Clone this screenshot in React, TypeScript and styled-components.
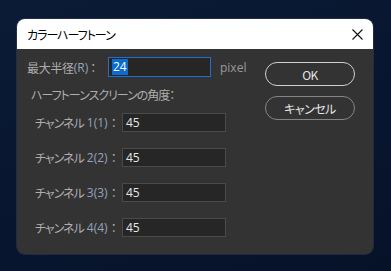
import React from "react";
import styled, { createGlobalStyle } from "styled-components";

const Global = createGlobalStyle`
  html, body { margin: 0; padding: 0; }
  body {
    width: 391px;
    height: 271px;
    overflow: hidden;
    background: linear-gradient(160deg, #0c1b35 0%, #081630 50%, #061228 100%);
    font-family: "Noto Sans CJK JP", "Noto Sans", sans-serif;
    font-feature-settings: "palt";
  }
`;

const Stage = styled.div`
  padding: 19px 18px 17px 17px;
`;

const Dialog = styled.div`
  width: 356px;
  height: 235px;
  border-radius: 8px;
  overflow: hidden;
  background: #333333;
  display: flex;
  flex-direction: column;
  box-shadow: 0 0 0 1px rgba(80, 90, 110, 0.35);
`;

const TitleBar = styled.div`
  height: 30px;
  flex: none;
  background: #ffffff;
  display: flex;
  align-items: center;
  padding-left: 10px;
`;

const Title = styled.div`
  flex: 1;
  font-size: 12px;
  color: #000;
  letter-spacing: -1px;
`;

const CloseBox = styled.div`
  width: 32px;
  height: 30px;
  display: flex;
  align-items: center;
  justify-content: center;
`;

const Body = styled.div`
  flex: 1;
  display: flex;
`;

const LeftCol = styled.div`
  padding: 8px 0 0 10px;
  display: flex;
  flex-direction: column;
`;

const Row = styled.div<{ $indent?: number; $h?: number }>`
  display: flex;
  align-items: center;
  height: ${(p) => p.$h ?? 20}px;
  padding-left: ${(p) => p.$indent ?? 0}px;
`;

const Label = styled.div<{ $w: number; $ls?: number }>`
  width: ${(p) => p.$w}px;
  font-size: 12px;
  color: #aeaeae;
  white-space: nowrap;
  display: flex;
  align-items: center;
  letter-spacing: ${(p) => p.$ls ?? 0}px;
`;

const Latin = styled.span<{ $gap?: number }>`
  font-family: "Open Sans", "Noto Sans", sans-serif;
  color: #93a3bd;
  letter-spacing: 0;
  margin-left: ${(p) => p.$gap ?? 0}px;
`;

const Colon = styled.span<{ $gap?: number }>`
  margin-left: ${(p) => p.$gap ?? 0}px;
`;

const Field = styled.div<{ $w: number; $focused?: boolean }>`
  box-sizing: border-box;
  width: ${(p) => p.$w}px;
  height: ${(p) => (p.$focused ? 20 : 19)}px;
  background: #262626;
  border: 1px solid ${(p) => (p.$focused ? "#1e6fcf" : "#4a4a4a")};
  display: flex;
  align-items: center;
  padding-left: 3px;
  font-family: "Open Sans", "Noto Sans", sans-serif;
  font-size: 12px;
  color: #e6e6e6;
`;

const Selected = styled.span`
  background: #0a6bd0;
  color: #ffffff;
  padding: 0 1px;
  line-height: 16px;
`;

const Unit = styled.div`
  margin-left: 9px;
  font-family: "Open Sans", "Noto Sans", sans-serif;
  font-size: 12px;
  color: #9a9a9a;
`;

const Heading = styled.div`
  margin-top: 10px;
  padding-left: 4px;
  height: 16px;
  line-height: 16px;
  font-size: 12px;
  color: #aeaeae;
  letter-spacing: -1px;
`;

const Channels = styled.div`
  margin-top: 10px;
  display: flex;
  flex-direction: column;
  gap: 16px;
`;

const RightCol = styled.div`
  margin-left: auto;
  padding: 13px 18px 0 0;
  display: flex;
  flex-direction: column;
  gap: 10px;
`;

const Button = styled.div<{ $primary?: boolean }>`
  box-sizing: border-box;
  width: 90px;
  height: 24px;
  border-radius: 12px;
  border: ${(p) => (p.$primary ? "1.5px solid #cfcfcf" : "1.5px solid #858585")};
  display: flex;
  align-items: center;
  justify-content: center;
  font-size: 12px;
  color: #e4e4e4;
  letter-spacing: -0.5px;
`;

const channels = [1, 2, 3, 4];

export default function App() {
  return (
    <>
      <Global />
      <Stage>
        <Dialog>
          <TitleBar>
            <Title>カラーハーフトーン</Title>
            <CloseBox>
              <svg width="11" height="11" viewBox="0 0 11 11">
                <path d="M0.5 0.5 L10.5 10.5 M10.5 0.5 L0.5 10.5" stroke="#111" strokeWidth="1.1" />
              </svg>
            </CloseBox>
          </TitleBar>
          <Body>
            <LeftCol>
              <Row>
                <Label $w={81} $ls={-0.3}>
                  最大半径<Latin>(R)</Latin>
                  <Colon $gap={2}>：</Colon>
                </Label>
                <Field $w={103} $focused>
                  <Selected>24</Selected>
                </Field>
                <Unit>pixel</Unit>
              </Row>
              <Heading>ハーフトーンスクリーンの角度：</Heading>
              <Channels>
                {channels.map((n) => (
                  <Row key={n} $indent={8} $h={19}>
                    <Label $w={87} $ls={-1}>
                      チャンネル
                      <Latin $gap={3}>
                        {n}({n})
                      </Latin>
                      <Colon $gap={3}>：</Colon>
                    </Label>
                    <Field $w={104}>45</Field>
                  </Row>
                ))}
              </Channels>
            </LeftCol>
            <RightCol>
              <Button $primary>OK</Button>
              <Button>キャンセル</Button>
            </RightCol>
          </Body>
        </Dialog>
      </Stage>
    </>
  );
}
